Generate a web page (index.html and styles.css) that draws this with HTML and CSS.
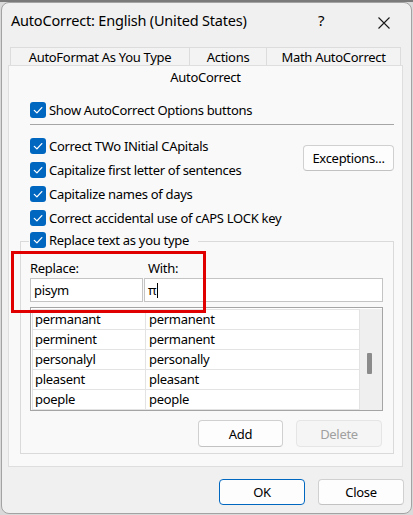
FILE: index.html
```html
<!DOCTYPE html>
<html>
<head>
<meta charset="utf-8">
<link rel="stylesheet" href="styles.css">
</head>
<body>
<div class="window">
  <div class="titlebar">
    <div class="title">AutoCorrect: English (United States)</div>
    <div class="help">?</div>
    <div class="close"><svg width="12" height="12" viewBox="0 0 12 12"><path d="M0.5 0.5L11.5 11.5M11.5 0.5L0.5 11.5" stroke="#1a1a1a" stroke-width="1.1" fill="none"/></svg></div>
  </div>
  <div class="tabrow">
    <div class="tab t1">AutoFormat As You Type</div>
    <div class="tab t2">Actions</div>
    <div class="tab t3">Math AutoCorrect</div>
  </div>
  <div class="panel">
    <div class="panel-tab">AutoCorrect</div>
    <div class="row show"><span class="cb"><svg width="16" height="16" viewBox="0 0 16 16"><path d="M4.3 8.4L6.9 10.9L11.8 5.6" stroke="#fff" stroke-width="1.3" fill="none" stroke-linecap="round" stroke-linejoin="round"/></svg></span>Show AutoCorrect Options buttons</div>
    <div class="sep"></div>
    <div class="opts">
      <div class="optlist">
        <div class="row"><span class="cb"><svg width="16" height="16" viewBox="0 0 16 16"><path d="M4.3 8.4L6.9 10.9L11.8 5.6" stroke="#fff" stroke-width="1.3" fill="none" stroke-linecap="round" stroke-linejoin="round"/></svg></span>Correct TWo INitial CApitals</div>
        <div class="row"><span class="cb"><svg width="16" height="16" viewBox="0 0 16 16"><path d="M4.3 8.4L6.9 10.9L11.8 5.6" stroke="#fff" stroke-width="1.3" fill="none" stroke-linecap="round" stroke-linejoin="round"/></svg></span>Capitalize first letter of sentences</div>
        <div class="row"><span class="cb"><svg width="16" height="16" viewBox="0 0 16 16"><path d="M4.3 8.4L6.9 10.9L11.8 5.6" stroke="#fff" stroke-width="1.3" fill="none" stroke-linecap="round" stroke-linejoin="round"/></svg></span>Capitalize names of days</div>
        <div class="row"><span class="cb"><svg width="16" height="16" viewBox="0 0 16 16"><path d="M4.3 8.4L6.9 10.9L11.8 5.6" stroke="#fff" stroke-width="1.3" fill="none" stroke-linecap="round" stroke-linejoin="round"/></svg></span>Correct accidental use of cAPS LOCK key</div>
      </div>
      <div class="btn exc">Exceptions...</div>
    </div>
    <div class="group">
      <div class="legend"><span class="cb"><svg width="16" height="16" viewBox="0 0 16 16"><path d="M4.3 8.4L6.9 10.9L11.8 5.6" stroke="#fff" stroke-width="1.3" fill="none" stroke-linecap="round" stroke-linejoin="round"/></svg></span>Replace text as you type</div>
      <div class="labels"><span class="lab1">Replace:</span><span>With:</span></div>
      <div class="inputs">
        <div class="input in1">pisym</div>
        <div class="input in2">π<span class="caret"></span></div>
      </div>
      <div class="list">
        <div class="cells">
          <div class="lrow"><div class="c1">permanant</div><div class="c2">permanent</div></div>
          <div class="lrow"><div class="c1">perminent</div><div class="c2">permanent</div></div>
          <div class="lrow"><div class="c1">personalyl</div><div class="c2">personally</div></div>
          <div class="lrow"><div class="c1">pleasent</div><div class="c2">pleasant</div></div>
          <div class="lrow"><div class="c1">poeple</div><div class="c2">people</div></div>
        </div>
        <div class="scrollbar"><div class="thumb"></div></div>
      </div>
      <div class="gbtns">
        <div class="btn gb">Add</div>
        <div class="btn gb disabled">Delete</div>
      </div>
    </div>
  </div>
  <div class="footer">
    <div class="btn fb ok">OK</div>
    <div class="btn fb">Close</div>
  </div>
  <div class="highlight"></div>
</div>
</body>
</html>
```

FILE: styles.css
```css
* { box-sizing: border-box; }
html, body { margin: 0; padding: 0; }
body {
  width: 413px;
  height: 515px;
  overflow: hidden;
  background: linear-gradient(#7a7a7a 0 2px, #d9d9d9 2px);
  font-family: "Noto Sans", "Open Sans", sans-serif;
  font-size: 13px;
  letter-spacing: -0.3px;
  color: #000;
}
.window {
  position: relative;
  width: 411px;
  height: 512px;
  margin: 2px 0 0 1px;
  border: 1px solid #a3a3a3;
  border-radius: 8px;
  background: #f0f0f0;
  overflow: hidden;
}
.titlebar {
  height: 44px;
  display: flex;
  align-items: flex-start;
}
.title {
  margin-left: 9px;
  line-height: 34px;
  font-size: 14.5px;
  letter-spacing: -0.2px;
  flex: 1;
}
.help {
  width: 14px;
  line-height: 34px;
  font-size: 15px;
  text-align: center;
  margin-right: 50px;
}
.close {
  width: 12px;
  height: 12px;
  margin-top: 14px;
  margin-right: 21px;
  display: flex;
}
.tabrow {
  display: flex;
  margin-left: 8px;
  width: 391px;
  height: 18px;
}
.tab {
  height: 18px;
  border: 1px solid #dcdcdc;
  border-bottom: none;
  background: #f3f3f3;
  text-align: center;
  line-height: 19px;
}
.t1 { width: 180px; }
.t2 { width: 77px; border-left: none; }
.t3 { width: 134px; border-left: none; }
.panel {
  margin-left: 6px;
  width: 395px;
  height: 402px;
  border: 1px solid #dedede;
  background: #f9f9f9;
  display: flex;
  flex-direction: column;
}
.panel-tab {
  height: 22px;
  line-height: 22px;
  text-align: center;
}
.row {
  height: 24px;
  display: flex;
  align-items: center;
  white-space: nowrap;
}
.show { margin: 10px 0 0 21px; }
.cb {
  width: 16px;
  height: 16px;
  border-radius: 3px;
  background: #0067c0;
  margin-right: 3px;
  display: flex;
  flex: none;
}
.sep {
  height: 1px;
  background: #a6a6a6;
  margin: 2px 8px 0 21px;
}
.opts {
  display: flex;
  justify-content: space-between;
  align-items: flex-start;
  margin: 9px 8px 0 21px;
}
.btn {
  border: 1px solid #d0d0d0;
  border-bottom-color: #c2c2c2;
  border-radius: 4px;
  background: #fdfdfd;
  display: flex;
  align-items: center;
  justify-content: center;
}
.exc {
  width: 91px;
  height: 26px;
  margin-top: 11px;
}
.group {
  margin: 11px 8px 0 11px;
  height: 213px;
  border: 1px solid #dadada;
  display: flex;
  flex-direction: column;
}
.legend {
  align-self: flex-start;
  display: flex;
  align-items: center;
  height: 16px;
  margin: -10px 0 0 8px;
  padding: 0 9px 0 1px;
  background: #f9f9f9;
  white-space: nowrap;
}
.labels {
  display: flex;
  margin: 10px 0 0 9px;
  line-height: 20px;
  height: 20px;
}
.lab1 { width: 118px; }
.inputs {
  display: flex;
  gap: 1px;
  margin-left: 9px;
  height: 24px;
}
.input {
  height: 24px;
  border: 1px solid #c4c4c4;
  background: #fff;
  padding-left: 3px;
  line-height: 22px;
  display: flex;
  align-items: center;
}
.in1 { width: 113px; }
.in2 { width: 239px; }
.caret {
  width: 1px;
  height: 15px;
  background: #000;
  margin-left: 1px;
}
.list {
  margin: 5px 0 0 9px;
  width: 353px;
  height: 104px;
  border: 1px solid #a5a5a5;
  padding: 1px 0 0 1px;
  display: flex;
  overflow: hidden;
  background: #fff;
}
.cells {
  width: 328px;
  border-top: 1px solid #e3e3e3;
  border-left: 1px solid #e3e3e3;
}
.lrow {
  display: flex;
  height: 20px;
  border-bottom: 1px solid #e3e3e3;
}
.c1 {
  width: 113px;
  padding-left: 2px;
  border-right: 1px solid #e3e3e3;
  line-height: 19px;
}
.c2 {
  width: 214px;
  padding-left: 3px;
  border-right: 1px solid #e3e3e3;
  line-height: 19px;
}
.scrollbar {
  width: 22px;
  background: #efefef;
  padding: 44px 0 0 7px;
}
.thumb {
  width: 5px;
  height: 21px;
  background: #8b8b8b;
  border-radius: 1px;
}
.gbtns {
  display: flex;
  justify-content: flex-end;
  gap: 13px;
  margin: 9px 11px 0 0;
}
.gb { height: 27px; width: 85px; }
.gb.disabled {
  width: 86px;
  background: #f5f5f5;
  border-color: #e5e5e5;
  color: #a0a0a0;
}
.footer {
  display: flex;
  justify-content: flex-end;
  gap: 13px;
  margin: 12px 7px 0 0;
}
.fb { width: 86px; height: 26px; }
.ok { border-color: #0067c0; }
.highlight {
  position: absolute;
  left: 9px;
  top: 248px;
  width: 195px;
  height: 62px;
  border: 3px solid #e00000;
}
```
